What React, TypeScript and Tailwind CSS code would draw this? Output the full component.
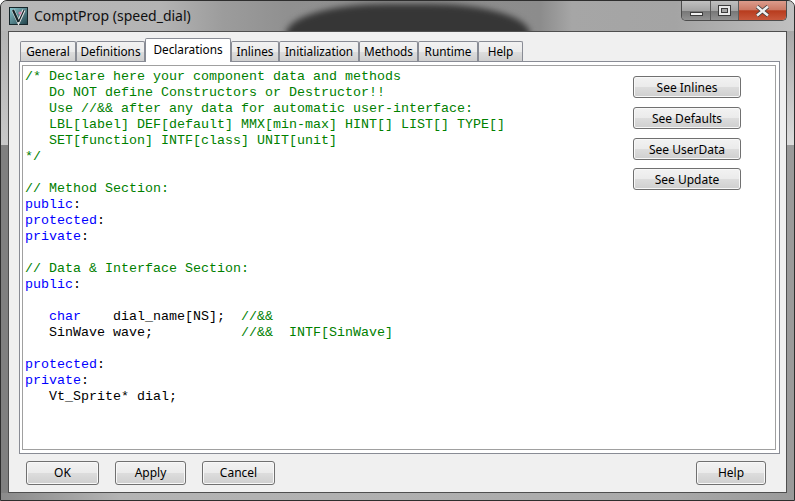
const mono = "font-['Liberation_Mono',monospace]";

type Span = { t: string; c?: "g" | "b" | "k" };

const codeLines: Span[][] = [
  [{ t: "/* Declare here your component data and methods", c: "g" }],
  [{ t: "   Do NOT define Constructors or Destructor!!", c: "g" }],
  [{ t: "   Use //&& after any data for automatic user-interface:", c: "g" }],
  [{ t: "   LBL[label] DEF[default] MMX[min-max] HINT[] LIST[] TYPE[]", c: "g" }],
  [{ t: "   SET[function] INTF[class] UNIT[unit]", c: "g" }],
  [{ t: "*/", c: "g" }],
  [],
  [{ t: "// Method Section:", c: "g" }],
  [{ t: "public", c: "b" }, { t: ":" }],
  [{ t: "protected", c: "b" }, { t: ":" }],
  [{ t: "private", c: "b" }, { t: ":" }],
  [],
  [{ t: "// Data & Interface Section:", c: "g" }],
  [{ t: "public", c: "b" }, { t: ":" }],
  [],
  [{ t: "   " }, { t: "char", c: "b" }, { t: "    dial_name[NS];  " }, { t: "//&&", c: "g" }],
  [{ t: "   SinWave wave;           " }, { t: "//&&  INTF[SinWave]", c: "g" }],
  [],
  [{ t: "protected", c: "b" }, { t: ":" }],
  [{ t: "private", c: "b" }, { t: ":" }],
  [{ t: "   Vt_Sprite* dial;" }],
];

const tabs = [
  { label: "General", w: "w-[56px]" },
  { label: "Definitions", w: "w-[69px]" },
  { label: "Declarations", w: "w-[86px]", active: true },
  { label: "Inlines", w: "w-[48px]" },
  { label: "Initialization", w: "w-[80px]" },
  { label: "Methods", w: "w-[59px]" },
  { label: "Runtime", w: "w-[60px]" },
  { label: "Help", w: "w-[45px]" },
];

function Btn({ label, className }: { label: string; className: string }) {
  return (
    <button
      className={
        "rounded-[3px] border border-[#707070] bg-[linear-gradient(#f2f2f2_0%,#ebebeb_48%,#dddddd_50%,#cfcfcf_100%)] text-[12px] leading-none text-black shadow-[inset_0_0_0_1px_#f8f8f8] " +
        className
      }
    >
      {label}
    </button>
  );
}

function Tab({ label, w, active }: { label: string; w: string; active?: boolean }) {
  if (active) {
    return (
      <div className={"relative z-10 -mb-px flex h-[24px] items-start justify-center rounded-t-[2px] border border-b-0 border-[#898c95] bg-[#ffffff] pt-[2px] text-[11.8px] leading-[16px] " + w}>
        {label}
      </div>
    );
  }
  return (
    <div className={"flex h-[20px] items-start justify-center rounded-t-[2px] border border-b-0 border-[#898c95] bg-[linear-gradient(#f2f2f2_0%,#ebebeb_50%,#dddddd_52%,#cfcfcf_100%)] pt-[1px] text-[11.8px] leading-[16px] " + w}>
      {label}
    </div>
  );
}

export default function App() {
  return (
    <div className="flex h-[501px] w-[795px] flex-col overflow-hidden rounded-t-[7px] border border-[#2e2e2e] bg-[#a0a0a0] font-['Noto_Sans',sans-serif] text-black">
      {/* title bar */}
      <div className="flex h-[30px] shrink-0 items-start overflow-hidden bg-[linear-gradient(90deg,#b8b8b8_0%,#b4b4b4_20%,#9c9c9c_28%,#909090_36%,#8c8c8c_68%,#a6a6a6_72%,#a4a4a4_85%,#c0c0c0_100%)] pl-[8px] pr-[7px]">
        <svg width="19" height="18" viewBox="0 0 19 18" className="mt-[6px] shrink-0">
          <defs>
            <linearGradient id="ic" x1="0" y1="0" x2="1" y2="1">
              <stop offset="0" stopColor="#8cc8d0" />
              <stop offset="1" stopColor="#1f4048" />
            </linearGradient>
          </defs>
          <rect x="0.5" y="0.5" width="18" height="17" fill="url(#ic)" stroke="#16262a" />
          <path d="M4 3 L9.5 15 L15 3" fill="none" stroke="#e8e8e8" strokeWidth="3.2" />
          <path d="M4 3 L9.5 15" fill="none" stroke="#142428" strokeWidth="2.2" />
          <path d="M9.5 15 L15 3" fill="none" stroke="#142428" strokeWidth="1.2" />
          <circle cx="11" cy="6" r="1.6" fill="#d080a8" />
        </svg>
        <span className="ml-[6px] mt-[5px] w-[157px] shrink-0 whitespace-nowrap text-[14px] leading-[20px] text-[#101010]">ComptProp (speed_dial)</span>
        {/* dark blurred shape of the wallpaper behind the glass */}
        <div className="ml-[95px] mt-[3px] h-[40px] w-[244px] shrink-0 rounded-t-[100px_30px] bg-[#363636] blur-[3px]" />
        <div className="ml-auto flex h-[20px] w-[106px] overflow-hidden rounded-b-[5px] border border-t-0 border-[#4c4c4c]">
          <div className="flex w-[29px] items-start justify-center border-r border-[#5c5c5c] bg-[linear-gradient(#c0c0c0_0%,#a4a4a4_50%,#787878_55%,#929292_100%)] pt-[11px]">
            <div className="h-[4px] w-[13px] border border-[#3c3c3c] bg-[#f0f0f0]" />
          </div>
          <div className="flex w-[28px] items-start justify-center border-r border-[#5c5c5c] bg-[linear-gradient(#c0c0c0_0%,#a4a4a4_50%,#787878_55%,#929292_100%)] pt-[4px]">
            <div className="h-[11px] w-[13px] border border-[#3c3c3c] bg-[#e8e8e8] p-[2px]">
              <div className="h-full w-full border border-[#3c3c3c] bg-[#a4a4a4]" />
            </div>
          </div>
          <div className="flex flex-1 items-start justify-center bg-[linear-gradient(#dc9c8c_0%,#cc7a66_45%,#b83c1e_52%,#c8583c_100%)] pt-[4px]">
            <svg width="15" height="12" viewBox="0 0 15 12">
              <path d="M2 1.5 L13 10.5 M13 1.5 L2 10.5" stroke="#3c3c3c" strokeWidth="4" />
              <path d="M2 1.5 L13 10.5 M13 1.5 L2 10.5" stroke="#f0f0f0" strokeWidth="2.4" />
            </svg>
          </div>
        </div>
      </div>

      <div className="flex min-h-0 flex-1">
        {/* left frame strip */}
        <div className="flex w-[7px] shrink-0 flex-col">
          <div className="h-[114px] bg-[linear-gradient(#b4b4b4,#c8c8c8)]" />
          <div className="flex-1 bg-[#808080]" />
        </div>

        {/* client area */}
        <div className="flex min-w-0 flex-1 flex-col border border-[#4f4f4f] bg-[#f0f0f0] pl-[10px] pr-[6px]">
          <div className="flex h-[29px] shrink-0 items-end pl-[1px]">
            {tabs.map((t) => (
              <Tab key={t.label} label={t.label} w={t.w} active={t.active} />
            ))}
          </div>
          <div className="h-[393px] shrink-0 border border-[#898c95] bg-white pb-[3px] pl-[2px] pr-[3px] pt-[3px]">
            <div className="flex h-full border border-[#a0a0a0] bg-white">
              <pre className={"flex-1 pl-[2px] pt-[3px] text-[13.33px] leading-[16px] " + mono}>
                {codeLines.map((line, i) => (
                  <div key={i} className="h-[16px]">
                    {line.map((s, j) => (
                      <span
                        key={j}
                        className={s.c === "g" ? "text-[#008000]" : s.c === "b" ? "text-[#0000ff]" : "text-black"}
                      >
                        {s.t}
                      </span>
                    ))}
                  </div>
                ))}
              </pre>
              <div className="mr-[34px] flex w-[108px] flex-col pt-[10px]">
                <Btn label="See Inlines" className="h-[22px] w-full pt-[2px]" />
                <Btn label="See Defaults" className="mt-[9px] h-[22px] w-full pt-[2px]" />
                <Btn label="See UserData" className="mt-[9px] h-[22px] w-full pt-[2px]" />
                <Btn label="See Update" className="mt-[8px] h-[22px] w-full pt-[2px]" />
              </div>
            </div>
          </div>
          <div className="flex flex-1 items-start pl-[7px] pr-[14px] pt-[7px]">
            <Btn label="OK" className="h-[24px] w-[73px]" />
            <Btn label="Apply" className="ml-[16px] h-[24px] w-[71px]" />
            <Btn label="Cancel" className="ml-[16px] h-[24px] w-[73px]" />
            <Btn label="Help" className="ml-auto h-[24px] w-[70px]" />
          </div>
        </div>

        {/* right frame strip */}
        <div className="flex w-[7px] shrink-0 flex-col">
          <div className="h-[114px] bg-[linear-gradient(#a8a8a8,#dcdcdc)]" />
          <div className="flex-1 bg-[#9a9a9a]" />
        </div>
      </div>

      {/* bottom frame strip */}
      <div className="h-[7px] shrink-0 bg-[linear-gradient(90deg,#8a8a8a_0%,#b4b4b4_15%,#b0b0b0_50%,#a8a8a8_85%,#9a9a9a_100%)]" />
    </div>
  );
}
